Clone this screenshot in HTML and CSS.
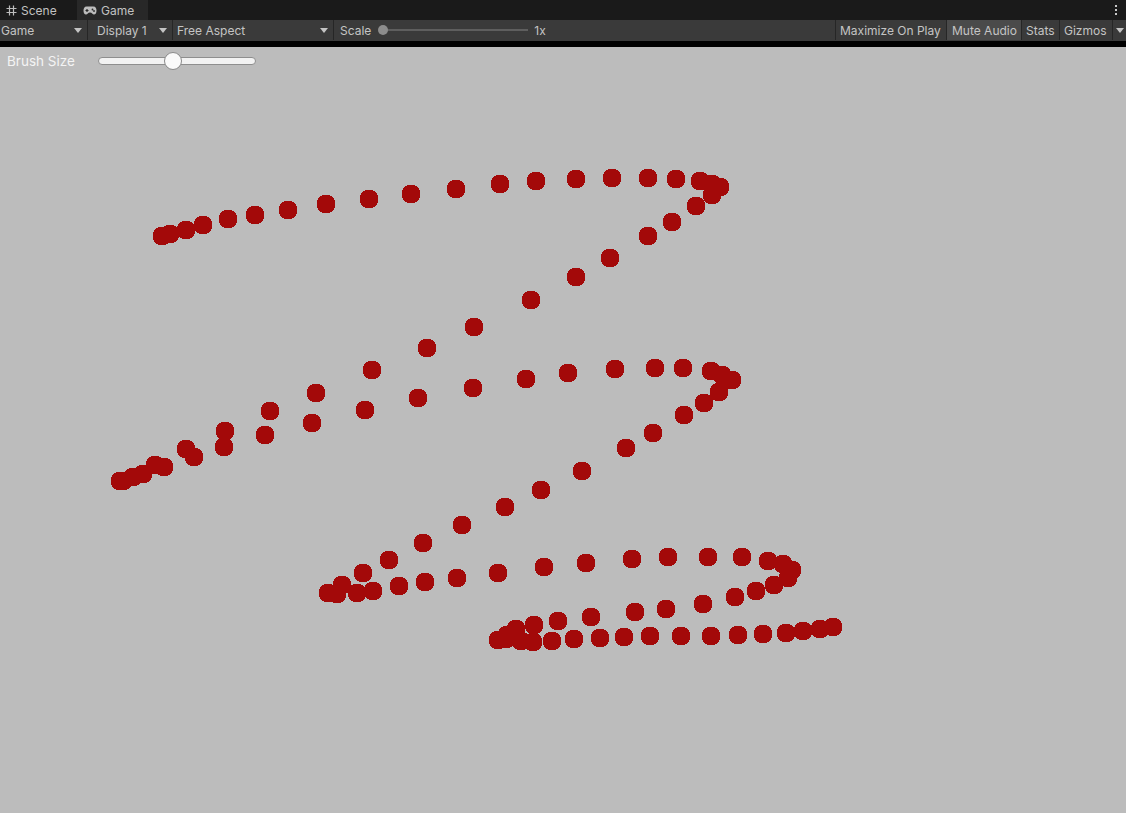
FILE: index.html
```html
<!DOCTYPE html>
<html>
<head>
<meta charset="utf-8">
<link rel="stylesheet" href="styles.css">
</head>
<body>
<div class="window">
  <div class="tabbar">
    <div class="tab">
      <svg class="ico" width="11" height="11" viewBox="0 0 11 11"><path d="M3.5 0.5V10.5M7.5 0.5V10.5M0.5 3.5H10.5M0.5 7.5H10.5" stroke="#bdbdbd" stroke-width="1.2" fill="none"/></svg>
      <span>Scene</span>
    </div>
    <div class="tab active">
      <svg class="ico pad" width="14" height="9" viewBox="0 0 14 9"><path d="M3.5 0.5H10.5C12.5 0.5 13.5 2.5 13.5 4.5C13.5 7 12.5 8.5 11 8.5C9.5 8.5 9 6.5 7 6.5C5 6.5 4.5 8.5 3 8.5C1.5 8.5 0.5 7 0.5 4.5C0.5 2.5 1.5 0.5 3.5 0.5Z" fill="#bdbdbd"/><path d="M2.5 4.5H5.5M4 3V6" stroke="#2a2a2a" stroke-width="1.2"/><circle cx="9.5" cy="3.5" r="0.9" fill="#2a2a2a"/><circle cx="11" cy="5" r="0.9" fill="#2a2a2a"/></svg>
      <span>Game</span>
    </div>
    <div class="spacer"></div>
    <div class="kebab"><i></i><i></i><i></i></div>
  </div>
  <div class="toolbar">
    <div class="drop w-game"><span>Game</span><b class="arrow"></b></div>
    <div class="drop w-display"><span>Display 1</span><b class="arrow"></b></div>
    <div class="drop w-aspect"><span>Free Aspect</span><b class="arrow"></b></div>
    <div class="scale">
      <span>Scale</span>
      <div class="scale-track"><div class="scale-knob"></div></div>
      <span class="scale-val">1x</span>
    </div>
    <div class="spacer"></div>
    <div class="btn maximize">Maximize On Play</div>
    <div class="btn mute on">Mute Audio</div>
    <div class="btn stats">Stats</div>
    <div class="btn gizmos">Gizmos</div>
    <div class="btn gizarrow"><b class="arrow"></b></div>
  </div>
  <div class="blackbar"></div>
  <div class="gameview">
    <div class="brush">
      <span class="brush-label">Brush Size</span>
      <div class="slider">
        <div class="slider-knob"></div>
      </div>
    </div>
  </div>
</div>
<svg class="canvas" width="1126" height="813" viewBox="0 0 1126 813" id="canvas"></svg>
<script src="app.js"></script>
</body>
</html>
```

FILE: app.js
```js
const pts = [
[162,236],[170,234],[186,230],[203,225],[228,219],[255,215],[288,210],[326,204],[369,199],[411,194],
[456,189],[500,184],[536,181],[576,179],[612,178],[648,178],[676,179],[700,181],[712,184],[720,187],
[712,195],[696,206],[672,222],[648,236],[610,258],[576,277],[531,300],[474,327],[427,348],[372,370],
[316,393],[270,411],[225,431],[186,449],[155,465],[133,477],[123,481],[120,481],
[143,474],[164,467],[194,457],[224,447],[265,435],[312,423],[365,410],[418,398],[473,388],[526,379],
[568,373],[615,369],[655,368],[683,368],[711,371],[722,375],[732,380],[719,392],[704,403],[684,415],
[653,433],[626,448],[582,471],[541,490],[505,507],[462,525],[423,543],[389,560],[363,573],[342,585],
[328,593],[337,594],[357,593],[373,591],[399,586],[425,582],[457,578],[498,573],[544,567],[586,563],
[632,559],[668,557],[708,557],[742,557],[768,561],[783,564],[792,570],[788,578],[774,585],[756,591],
[735,597],[703,604],[666,609],[635,612],[591,617],[558,621],[534,625],[516,629],[507,635],[498,640],
[506,639],[516,637],[521,641],[533,642],[552,641],[574,639],[600,638],[624,637],[650,636],[681,636],
[711,636],[738,635],[763,634],[786,633],[803,631],[820,629],[833,627]
];
const svg = document.getElementById('canvas');
const NS = 'http://www.w3.org/2000/svg';
for (const [x, y] of pts) {
  const c = document.createElementNS(NS, 'circle');
  c.setAttribute('cx', x);
  c.setAttribute('cy', y);
  c.setAttribute('r', 9.5);
  svg.appendChild(c);
}
```

FILE: styles.css
```css
html, body {
  margin: 0;
  padding: 0;
  width: 1126px;
  height: 813px;
  overflow: hidden;
  background: #bcbcbc;
  font-family: Inter, "Liberation Sans", sans-serif;
}
.window {
  display: flex;
  flex-direction: column;
  height: 813px;
}
.tabbar {
  height: 20px;
  background: #1a1a1a;
  display: flex;
  align-items: stretch;
  color: #c2c2c2;
  font-size: 12px;
}
.tab {
  display: flex;
  align-items: center;
  gap: 4px;
  padding: 0 0 0 6px;
  width: 77px;
  box-sizing: border-box;
}
.tab.active {
  background: #282828;
  width: 71px;
}
.ico { display: block; }
.spacer { flex: 1; }
.kebab {
  width: 20px;
  display: flex;
  flex-direction: column;
  align-items: center;
  justify-content: center;
  gap: 2px;
}
.kebab i {
  display: block;
  width: 2px;
  height: 2px;
  background: #c8c8c8;
}
.toolbar {
  height: 21px;
  background: #3a3a3a;
  display: flex;
  align-items: stretch;
  color: #c4c4c4;
  font-size: 12px;
  box-sizing: border-box;
  padding-bottom: 1px;
}
.drop {
  display: flex;
  align-items: center;
  justify-content: space-between;
  box-sizing: border-box;
  border-right: 1px solid #262626;
  padding: 0 5px 0 4px;
}
.w-game { width: 88px; padding-left: 1px; }
.w-display { width: 85px; padding-left: 9px; }
.w-aspect { width: 161px; padding-left: 4px; }
.arrow {
  display: block;
  width: 0;
  height: 0;
  border-left: 4px solid transparent;
  border-right: 4px solid transparent;
  border-top: 5px solid #c4c4c4;
}
.scale {
  display: flex;
  align-items: center;
  padding-left: 6px;
}
.scale-track {
  position: relative;
  margin-left: 12px;
  width: 145px;
  height: 2px;
  background: #5e5e5e;
}
.scale-knob {
  position: absolute;
  left: -5px;
  top: -4px;
  width: 10px;
  height: 10px;
  border-radius: 50%;
  background: #8c8c8c;
}
.scale-val { margin-left: 6px; }
.btn {
  display: flex;
  align-items: center;
  box-sizing: border-box;
  border-left: 1px solid #262626;
  padding: 0 4px;
}
.maximize { width: 111px; }
.mute { width: 75px; padding-left: 5px; }
.mute.on { background: #4a4a4a; }
.stats { width: 38px; }
.gizmos { width: 53px; padding-left: 4px; }
.gizarrow { width: 14px; padding: 0 0 0 3px; }
.blackbar {
  height: 6px;
  background: #000;
}
.gameview {
  flex: 1;
  background: #bcbcbc;
  position: relative;
}
.brush {
  display: flex;
  align-items: center;
  height: 28px;
  padding-left: 7px;
}
.brush-label {
  color: #f4f4f4;
  font-size: 13.5px;
  width: 91px;
}
.slider {
  position: relative;
  width: 158px;
  height: 8px;
  box-sizing: border-box;
  border: 1px solid #8e8e8e;
  border-radius: 4px;
  background: #f2f2f2;
}
.slider-knob {
  position: absolute;
  left: 65px;
  top: -6px;
  width: 18px;
  height: 18px;
  box-sizing: border-box;
  border-radius: 50%;
  border: 1px solid #8a8a8a;
  background: #fafafa;
}
.canvas {
  position: absolute;
  left: 0;
  top: 0;
  pointer-events: none;
}
.canvas circle {
  fill: #a30909;
  shape-rendering: crispEdges;
}
```
